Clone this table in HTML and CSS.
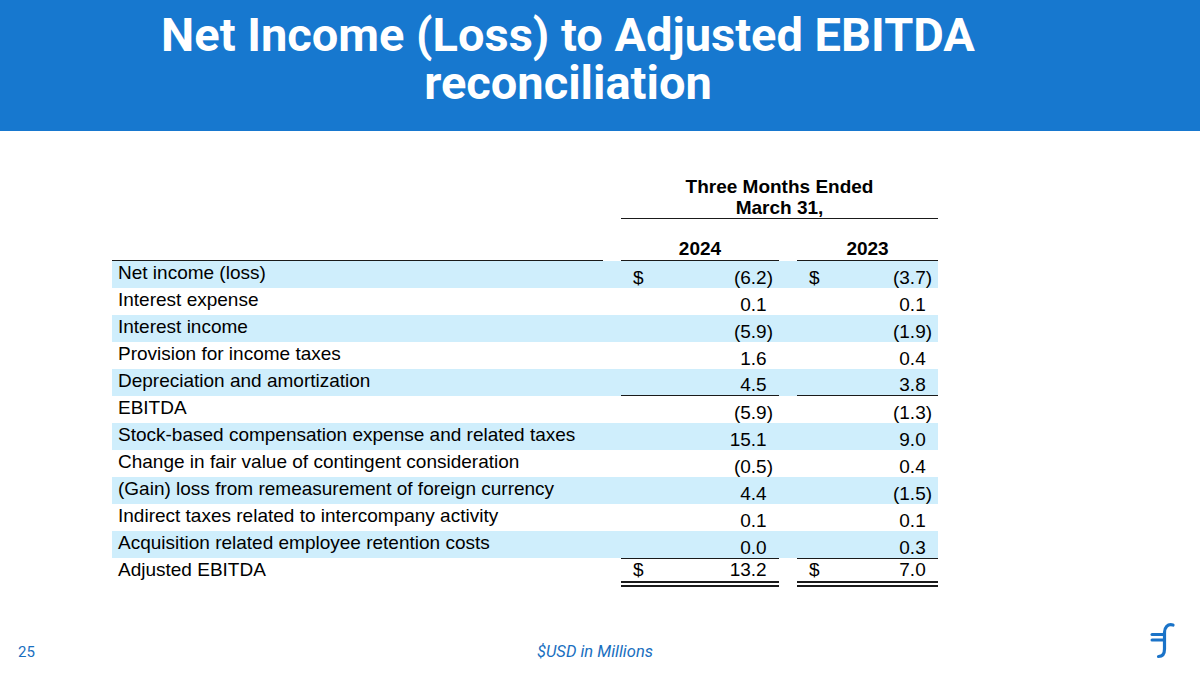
FILE: index.html
```html
<!DOCTYPE html>
<html lang="en">
<head>
<meta charset="utf-8">
<title>Net Income (Loss) to Adjusted EBITDA reconciliation</title>
<link rel="stylesheet" href="styles.css">
</head>
<body>
<div class="slide">
  <header class="banner">
    <h1 class="title"><span class="tline">Net Income (Loss) to Adjusted EBITDA</span><span class="tline">reconciliation</span></h1>
  </header>

  <main class="content">
    <table class="recon">
      <colgroup>
        <col class="c-label"><col class="c-gap"><col class="c-num1"><col class="c-gap"><col class="c-num2">
      </colgroup>
      <thead>
        <tr class="h-period">
          <th></th><th></th>
          <th colspan="3" class="period">Three Months Ended</th>
        </tr>
        <tr class="h-period2">
          <th></th><th></th>
          <th colspan="3" class="period rule">March 31,</th>
        </tr>
        <tr class="h-year">
          <th class="rule"></th><th></th>
          <th class="year rule">2024</th><th></th>
          <th class="year rule">2023</th>
        </tr>
      </thead>
      <tbody>
        <tr class="band">
          <td class="lbl">Net income (loss)</td><td></td>
          <td class="num"><span class="cur">$</span><span class="val">(6.2)</span></td><td></td>
          <td class="num"><span class="cur">$</span><span class="val">(3.7)</span></td>
        </tr>
        <tr>
          <td class="lbl">Interest expense</td><td></td>
          <td class="num"><span class="val pos">0.1</span></td><td></td>
          <td class="num"><span class="val pos">0.1</span></td>
        </tr>
        <tr class="band">
          <td class="lbl">Interest income</td><td></td>
          <td class="num"><span class="val">(5.9)</span></td><td></td>
          <td class="num"><span class="val">(1.9)</span></td>
        </tr>
        <tr>
          <td class="lbl">Provision for income taxes</td><td></td>
          <td class="num"><span class="val pos">1.6</span></td><td></td>
          <td class="num"><span class="val pos">0.4</span></td>
        </tr>
        <tr class="band sub">
          <td class="lbl">Depreciation and amortization</td><td></td>
          <td class="num under"><span class="val pos">4.5</span></td><td></td>
          <td class="num under"><span class="val pos">3.8</span></td>
        </tr>
        <tr>
          <td class="lbl">EBITDA</td><td></td>
          <td class="num"><span class="val">(5.9)</span></td><td></td>
          <td class="num"><span class="val">(1.3)</span></td>
        </tr>
        <tr class="band">
          <td class="lbl">Stock-based compensation expense and related taxes</td><td></td>
          <td class="num"><span class="val pos">15.1</span></td><td></td>
          <td class="num"><span class="val pos">9.0</span></td>
        </tr>
        <tr>
          <td class="lbl">Change in fair value of contingent consideration</td><td></td>
          <td class="num"><span class="val">(0.5)</span></td><td></td>
          <td class="num"><span class="val pos">0.4</span></td>
        </tr>
        <tr class="band">
          <td class="lbl">(Gain) loss from remeasurement of foreign currency</td><td></td>
          <td class="num"><span class="val pos">4.4</span></td><td></td>
          <td class="num"><span class="val">(1.5)</span></td>
        </tr>
        <tr>
          <td class="lbl">Indirect taxes related to intercompany activity</td><td></td>
          <td class="num"><span class="val pos">0.1</span></td><td></td>
          <td class="num"><span class="val pos">0.1</span></td>
        </tr>
        <tr class="band">
          <td class="lbl">Acquisition related employee retention costs</td><td></td>
          <td class="num"><span class="val pos">0.0</span></td><td></td>
          <td class="num"><span class="val pos">0.3</span></td>
        </tr>
        <tr class="total">
          <td class="lbl">Adjusted EBITDA</td><td></td>
          <td class="num dbl"><span class="cur">$</span><span class="val pos">13.2</span></td><td></td>
          <td class="num dbl"><span class="cur">$</span><span class="val pos">7.0</span></td>
        </tr>
      </tbody>
    </table>
  </main>

  <footer class="footer">
    <span class="page-no">25</span>
    <span class="note">$USD in Millions</span>
    <svg class="logo" viewBox="0 0 40 40" width="40" height="40" aria-label="logo">
      <path d="M27 6 C21.5 4.5 18.5 8.5 18.5 13.5 L18.5 30 C18.5 35 16.5 37.5 12.5 37.5" fill="none" stroke="#1a73c8" stroke-width="3.2" stroke-linecap="round"/>
      <path d="M6 15.5 H18" stroke="#1a73c8" stroke-width="3" stroke-linecap="round"/>
      <path d="M6 21 H18.5" stroke="#1a73c8" stroke-width="3" stroke-linecap="round"/>
    </svg>
  </footer>
</div>
</body>
</html>
```

FILE: styles.css
```css
* { box-sizing: border-box; }

html, body {
  margin: 0;
  padding: 0;
  background: #ffffff;
}

.slide {
  width: 1200px;
  height: 675px;
  display: flex;
  flex-direction: column;
  overflow: hidden;
  background: #ffffff;
}

.banner {
  height: 131px;
  flex: none;
  background: #1778cf;
  padding: 11px 64px 0 0;
}

.title {
  margin: 0;
  display: flex;
  flex-direction: column;
  align-items: center;
  font-family: Roboto, "Liberation Sans", sans-serif;
  font-weight: 700;
  font-size: 47px;
  line-height: 48px;
  letter-spacing: 0;
  color: #ffffff;
}

.tline {
  display: block;
  line-height: 48px;
}

.content {
  flex: 1;
  padding: 44px 0 0 112px;
}

.recon {
  border-collapse: separate;
  border-spacing: 0;
  font-family: "Liberation Sans", Arial, sans-serif;
  font-size: 19px;
  color: #000000;
  table-layout: fixed;
  width: 826px;
}

.c-label { width: 491px; }
.c-gap { width: 18px; }
.c-num1 { width: 158px; }
.c-num2 { width: 141px; }

.recon th, .recon td {
  padding: 0;
}

.recon th {
  font-weight: 700;
  text-align: center;
  line-height: 21px;
}

.h-period th { height: 22px; vertical-align: bottom; }
.h-period2 th { height: 22px; vertical-align: bottom; }
.period.rule { border-bottom: 1.5px solid #1a1a1a; padding-bottom: 0; }

.h-year th { height: 42px; vertical-align: bottom; padding-bottom: 1px; }
.h-year th.rule { border-bottom: 1.5px solid #1a1a1a; }

.recon tbody tr { height: 27px; }
.recon tbody tr.band { background: #cfeefc; }

.lbl {
  vertical-align: top;
  line-height: 21px;
  padding: 1px 0 0 6px !important;
  white-space: nowrap;
}

.num {
  vertical-align: bottom;
  line-height: 21px;
  padding: 0 6px 0 12px !important;
}

.num .cur { float: left; }
.num .val { float: right; }
.num .val.pos { padding-right: 0.333em; }

.num.under { border-bottom: 1.5px solid #1a1a1a; }

.total .lbl { padding-top: 1px !important; }
.total .num {
  vertical-align: top;
  height: 29px;
  border-top: 1.5px solid #1a1a1a;
  border-bottom: 6px double #1a1a1a;
}

.footer {
  flex: none;
  height: 62px;
  display: flex;
  align-items: center;
  padding: 0 14px 0 18px;
  font-family: Roboto, "Liberation Sans", sans-serif;
  color: #1a6fc0;
}

.page-no {
  font-size: 15px;
  width: 519px;
  padding-top: 16px;
}

.note {
  font-size: 16.5px;
  font-style: italic;
  padding-top: 14px;
}

.logo {
  margin-left: auto;
  margin-top: -10px;
}
```
